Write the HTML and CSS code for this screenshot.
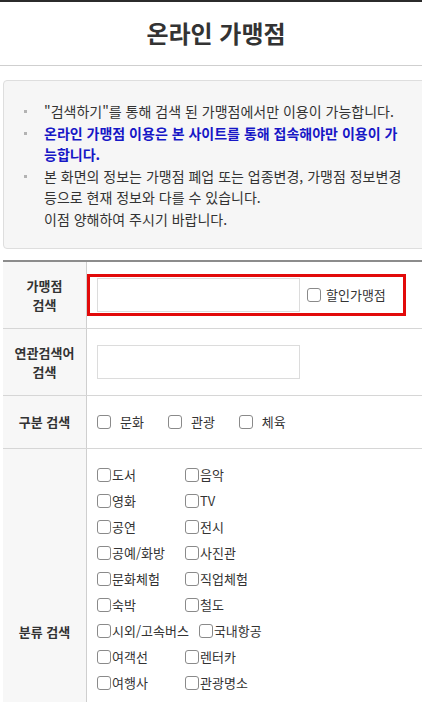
FILE: index.html
```html
<!DOCTYPE html>
<html lang="ko">
<head>
<meta charset="utf-8">
<title>온라인 가맹점</title>
<link rel="stylesheet" href="styles.css">
</head>
<body>
<div class="page">
  <h1 class="title">온라인 가맹점</h1>

  <div class="notice">
    <ul class="notice-list">
      <li>"검색하기"를 통해 검색 된 가맹점에서만 이용이 가능합니다.</li>
      <li class="strong">온라인 가맹점 이용은 본 사이트를 통해 접속해야만 이용이 가<br>능합니다.</li>
      <li>본 화면의 정보는 가맹점 폐업 또는 업종변경, 가맹점 정보변경<br>등으로 현재 정보와 다를 수 있습니다.<br>이점 양해하여 주시기 바랍니다.</li>
    </ul>
  </div>

  <table class="search">
    <tr class="row-store">
      <th>가맹점<br>검색</th>
      <td>
        <div class="highlight">
          <input type="text" class="field">
          <label class="check sale"><input type="checkbox"><span>할인가맹점</span></label>
        </div>
      </td>
    </tr>
    <tr class="row-keyword">
      <th>연관검색어<br>검색</th>
      <td><input type="text" class="field"></td>
    </tr>
    <tr class="row-type">
      <th>구분 검색</th>
      <td>
        <div class="types">
          <label class="check"><input type="checkbox"><span>문화</span></label>
          <label class="check"><input type="checkbox"><span>관광</span></label>
          <label class="check"><input type="checkbox"><span>체육</span></label>
        </div>
      </td>
    </tr>
    <tr class="row-cat">
      <th>분류 검색</th>
      <td>
        <div class="cats">
          <label class="cat"><input type="checkbox"><span>도서</span></label>
          <label class="cat"><input type="checkbox"><span>음악</span></label>
          <label class="cat"><input type="checkbox"><span>영화</span></label>
          <label class="cat"><input type="checkbox"><span>TV</span></label>
          <label class="cat"><input type="checkbox"><span>공연</span></label>
          <label class="cat"><input type="checkbox"><span>전시</span></label>
          <label class="cat"><input type="checkbox"><span>공예/화방</span></label>
          <label class="cat"><input type="checkbox"><span>사진관</span></label>
          <label class="cat"><input type="checkbox"><span>문화체험</span></label>
          <label class="cat"><input type="checkbox"><span>직업체험</span></label>
          <label class="cat"><input type="checkbox"><span>숙박</span></label>
          <label class="cat"><input type="checkbox"><span>철도</span></label>
          <label class="cat"><input type="checkbox"><span>시외/고속버스</span></label>
          <label class="cat"><input type="checkbox"><span>국내항공</span></label>
          <label class="cat"><input type="checkbox"><span>여객선</span></label>
          <label class="cat"><input type="checkbox"><span>렌터카</span></label>
          <label class="cat"><input type="checkbox"><span>여행사</span></label>
          <label class="cat"><input type="checkbox"><span>관광명소</span></label>
        </div>
      </td>
    </tr>
  </table>
</div>
</body>
</html>
```

FILE: styles.css
```css
html, body {
  margin: 0;
  padding: 0;
  overflow: hidden;
  background: #fff;
}
body {
  border-top: 2px solid #2b2b2b;
  font-family: "Noto Sans CJK KR", "Noto Sans", sans-serif;
  color: #333;
}
.page {
  width: 432px;
}
.title {
  margin: 0;
  height: 63px;
  line-height: 62px;
  font-size: 24px;
  font-weight: 700;
  text-align: center;
  color: #333;
  border-bottom: 1px solid #cfcfcf;
}
.notice {
  margin: 14px 0 0 3px;
  background: #f6f6f6;
  border: 1px solid #dedede;
  border-radius: 4px;
  padding: 20px 0 17px;
}
.notice-list {
  list-style: none;
  margin: 0;
  padding: 0 0 0 40px;
  font-size: 14px;
  line-height: 21.6px;
  color: #333;
  white-space: nowrap;
}
.notice-list li {
  position: relative;
}
.notice-list li::before {
  content: "";
  position: absolute;
  left: -20px;
  top: 9px;
  width: 3px;
  height: 3px;
  background: #b3b3b3;
}
.notice-list .strong {
  color: #1717c6;
  font-weight: 700;
}
.search {
  margin: 11px 0 0 3px;
  width: 429px;
  border-collapse: collapse;
  border-top: 2px solid #8c8c8c;
}
.search th {
  width: 83px;
  padding: 0;
  background: #f7f7f7;
  border-right: 1px solid #cfcfcf;
  border-bottom: 1px solid #d6d6d6;
  font-size: 13px;
  font-weight: 700;
  line-height: 19px;
  color: #333;
  text-align: center;
  vertical-align: middle;
}
.search td {
  border-bottom: 1px solid #d6d6d6;
  padding: 16px 0 16px 10px;
  font-size: 13px;
  color: #333;
  vertical-align: middle;
}
.row-store td {
  padding: 12px 0 12px 0;
}
.row-cat td {
  padding: 13px 0 119px 10px;
}
.highlight {
  display: inline-flex;
  align-items: center;
  border: 3px solid #e20a0a;
  padding: 1px 17px 1px 7px;
}
.field {
  display: block;
  box-sizing: border-box;
  width: 203px;
  height: 34px;
  margin: 0;
  border: 1px solid #dcdcdc;
  background: #fff;
  outline: none;
}
input[type="checkbox"] {
  appearance: none;
  -webkit-appearance: none;
  box-sizing: border-box;
  width: 14px;
  height: 14px;
  margin: 0;
  border: 1px solid #8a8a8a;
  border-radius: 3px;
  background: #fff;
  flex: none;
}
.check {
  display: inline-flex;
  align-items: center;
  line-height: 20px;
}
.check span {
  margin-left: 9px;
}
.sale {
  margin-left: 7px;
}
.sale span {
  margin-left: 5px;
}
.types {
  display: flex;
  align-items: center;
  gap: 24px;
}
.cats {
  display: flex;
  flex-wrap: wrap;
  width: 210px;
}
.cat {
  display: inline-flex;
  align-items: center;
  min-width: 78px;
  margin-right: 10px;
  height: 26px;
  line-height: 26px;
  white-space: nowrap;
}
.cat span {
  margin-left: 1px;
}
```
